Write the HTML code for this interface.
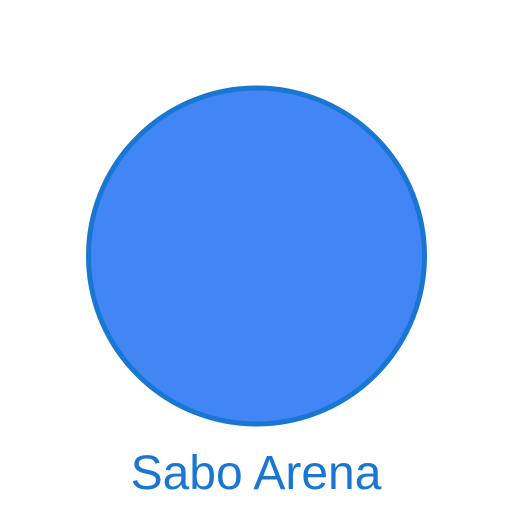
<!DOCTYPE html>
<html><head><style>
html,body{margin:0;padding:0;background:#fff;width:512px;height:512px;overflow:hidden}
</style></head><body>
<svg width="512" height="512" viewBox="0 0 512 512" xmlns="http://www.w3.org/2000/svg">
<circle cx="256.5" cy="256" r="168" fill="#4285F4" stroke="#1976D2" stroke-width="5"/>
<text x="256" y="489" text-anchor="middle" font-family="Liberation Sans, sans-serif" font-size="48" fill="#1976D2">Sabo Arena</text>
</svg>
</body></html>
